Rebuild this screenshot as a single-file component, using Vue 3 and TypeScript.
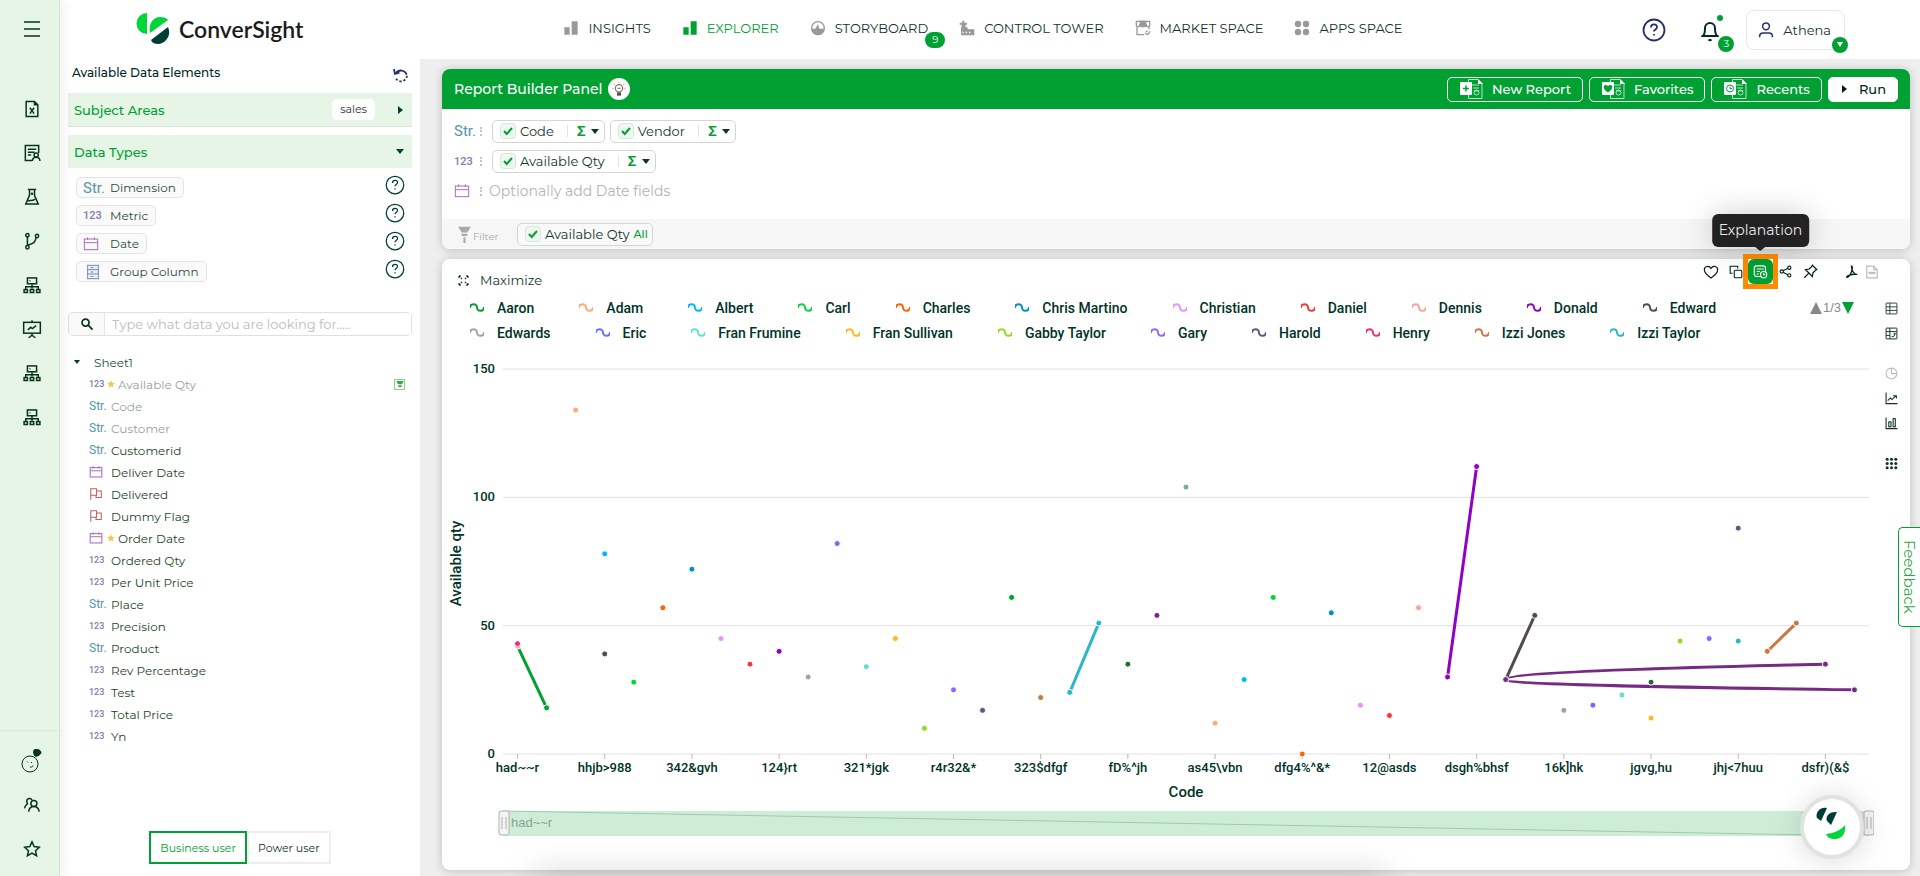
<script setup lang="ts">
import { computed, h, onBeforeUnmount, onMounted, ref } from 'vue'

const paths: Record<string, string> = {
  menu: '<path d="M4 5h16M4 12h16M4 19h16"/>',
  fileX: '<path d="M5 3h10l4 4v14H5zM15 3v4h4M9.500 10.500l5 7M14.500 10.500l-5 7"/>',
  report: '<path d="M12 21H4V3h16v9M7 7.500h10M7 11h8M7 14.500h4"/><circle cx="17" cy="14.500" r="2.500"/><path d="M12.500 21.500c0-3 2-4.500 4.500-4.500s4.500 1.500 4.500 4.500"/>',
  flask: '<path d="M7 3h10M9 3v7L4.500 20.500h15L15 10V3M7.500 17c2-2 4 1 8-2.500"/><circle cx="12" cy="8" r=".6"/>',
  branch: '<circle cx="6.500" cy="5" r="2"/><circle cx="6.500" cy="19.500" r="2"/><circle cx="18" cy="6" r="2"/><path d="M6.500 7v10.500M6.500 17c8-2 9-3 10.500-9"/>',
  server: '<rect x="6.500" y="3.500" width="11" height="7"/><path d="M9 7h1M12 10.500v6M4.500 17v-3h15v3"/><rect x="2.500" y="17.500" width="4" height="3.500"/><rect x="10" y="17.500" width="4" height="3.500"/><rect x="17.500" y="17.500" width="4" height="3.500"/>',
  board: '<rect x="2" y="4" width="20" height="13"/><path d="M7 13l3.500-3 2 1.500L17 8M12 1.500V4M12 17v3M8 22.500l4-3 4 3"/>',
  users: '<circle cx="14.500" cy="10" r="4"/><path d="M7.500 21c.5-4.500 3-7 7-7s6.500 2.500 7 7M12 5.500C10.500 2 5 3 5 7c0 2 1 3 1 3.500-2 1-3.500 3-4 6"/>',
  star: '<path d="M12 2.500l2.900 6.300 6.900.8-5.100 4.600 1.400 6.800-6.100-3.400L5.900 21l1.400-6.800-5.100-4.600 6.900-.8z"/>',
  help: '<circle cx="12" cy="12" r="10.500"/><path d="M9 9.500c0-4 6-4 6-.5 0 2.500-3 2.500-3 4.500M12 16v1.500"/>',
  bell: '<path d="M5 18c2-2 2-5 2-8a5 5 0 0 1 10 0c0 3 0 6 2 8zM3.500 18h17M10.500 21.500c1 1 2 1 3 0"/>',
  user: '<circle cx="12" cy="7" r="4.500"/><path d="M3.500 21.500v-1c0-3 2-4.500 4.500-4.500h8c2.500 0 4.500 1.500 4.500 4.500v1"/>',
  undo: '<path d="M5 10a8 8 0 0 1 14.500 1.500M2.500 4l1.500 6.500 6-1.500"/><path d="M20 13a8 8 0 0 1-14.500 4" stroke-dasharray="3 2.500"/>',
  search: '<circle cx="9.500" cy="9.500" r="6"/><path d="M14 14l7.500 7.500"/>',
  calendar: '<rect x="2" y="4.500" width="20" height="16"/><path d="M2 10h20M7 2v4M17 2v4"/>',
  flag: '<path d="M3 22V3h10v11H3M13 7h8v11h-9v-4"/>',
  group: '<rect x="4" y="2" width="16" height="20"/><path d="M4 8.500h16M4 15h16M8 5.500h5M8 12h5M8 18.500h5M16 5.500h1M16 12h1M16 18.500h1"/>',
  bars: '<path d="M2 11h8v11H2zM13 2h9v20h-9z" fill="currentColor" stroke="none"/>',
  gauge: '<path d="M2 13h6l4-7 2 7h8a10 10 0 0 1-20 0z" fill="currentColor" stroke="none"/><circle cx="12" cy="12" r="9.500"/>',
  tower: '<path d="M1 4h4V1h3v3h4v3h-2v4h3v3h10v9H3V11H4V7H1z" fill="currentColor" stroke="none"/><path d="M6 17.500v2.500M11 17.500v2.500M16 17.500v2.500" stroke="#fff"/>',
  market: '<path d="M3 10v12h11M21 10v4M2 8V2h20v6c0 3-4 3-5 0-1 3-9 3-10 0-1 3-5 3-5 0z"/><path d="M8 2h8v7H8z" fill="currentColor"/><path d="M15 19l4 3 4-5M16 17h3"/>',
  apps: '<g fill="currentColor" stroke="none"><circle cx="6" cy="6" r="4.800"/><circle cx="18" cy="6" r="4.800"/><circle cx="6" cy="18" r="4.800"/><circle cx="18" cy="18" r="4.800"/></g>',
  check: '<path d="M4 12l5.500 6L20 6"/>',
  expand: '<path d="M2 2h6M2 2v6M2 2l7 7M22 2h-6M22 2v6M22 2l-7 7M2 22h6M2 22v-6M2 22l7-7M22 22h-6M22 22v-6M22 22l-7-7" stroke-dasharray="4 2"/>',
  heart: '<path d="M12 21C5 16 2 12.500 2 8.500 2 3 9 2 12 6.500 15 2 22 3 22 8.500c0 4-3 7.500-10 12.500z"/>',
  copy: '<rect x="9" y="9" width="13" height="13" rx="2"/><path d="M6 14H2V2h13v4"/>',
  explain: '<rect x="2" y="3" width="18" height="17" rx="4"/><path d="M6 8h11M6 12h5M6 16h3"/><circle cx="17" cy="17" r="5" fill="#00a033"/><path d="M17 14.500V17h2.500"/>',
  share: '<circle cx="5" cy="12" r="3"/><circle cx="19" cy="5" r="3"/><circle cx="19" cy="19" r="3"/><path d="M7.500 10.500L16.500 6M7.500 13.500l9 4.500"/>',
  pin: '<path d="M15 2l7 7-2 1-4 4-1 6L4 9l6-1 4-4zM9 15l-7 7"/>',
  pdf: '<path d="M11 2c3 0 1 8-1 12-2 5-6 8-7 7s5-6 18-5c-5 1-10-6-10-14z"/>',
  xlsx: '<path d="M3 22V2h12l6 6v14zM15 2v6h6M6 15h12M6 12.500h12"/>',
  table: '<rect x="2" y="2" width="20" height="20" rx="1"/><path d="M2 9h20M2 15.500h20M9 2v20"/>',
  pivot: '<rect x="2" y="2" width="20" height="20" rx="1"/><path d="M2 8.500h20M9 2v20M2 15.500h7M12 18c5 0 6-2 6-6M15.500 13.500L18 11l2 2.500"/>',
  pie: '<circle cx="12" cy="12" r="10"/><path d="M12 2v10h10"/>',
  line: '<path d="M2 1v20.500h21M5 16l5-5 3 3 7-7M15 7h6v5"/>',
  barChart: '<path d="M2 1v20.500h21"/><rect x="7" y="9" width="4" height="9"/><rect x="15" y="3" width="4" height="15"/>',
  grid: '<g fill="currentColor" stroke="none"><circle cx="4" cy="4" r="2.800"/><circle cx="12" cy="4" r="2.800"/><circle cx="20" cy="4" r="2.800"/><circle cx="4" cy="12" r="2.800"/><circle cx="12" cy="12" r="2.800"/><circle cx="20" cy="12" r="2.800"/><circle cx="4" cy="20" r="2.800"/><circle cx="12" cy="20" r="2.800"/><circle cx="20" cy="20" r="2.800"/></g>',
  bulb: '<path d="M12 1v2M4 4l2 2M20 4l-2 2M2 11h2M22 11h-2" stroke="#f3b27a"/><circle cx="12" cy="11" r="5.500" stroke="#777"/><path d="M9.500 11h5" stroke="#888"/><path d="M9 17h6v5H9z" fill="#555" stroke="none"/>',
  mascot: '<circle cx="10" cy="15" r="8"/><path d="M7 12.500l1 1M11 13l1 1M10 18c2 .5 3-.5 3-1.500"/><path d="M14 1c2-1 7-1 7 3-1 2-4 4-6 3-1-1-2-4-1-6z" fill="currentColor"/>',
  funnel: '<path d="M3 1h18l-5 8H8z" fill="currentColor" stroke="none"/><path d="M8 11h8v3H8zM10.500 16h3v8h-3z" fill="currentColor" stroke="none"/>',
  marker: '<path d="M1 3h22l-5 10H6zM7 16h10v5H7z" fill="currentColor" stroke="none"/>',
}

const Icon = (props: { name: string; size?: number; weight?: number }) =>
  h('svg', {
    viewBox: '0 0 24 24',
    width: props.size ?? 16,
    height: props.size ?? 16,
    fill: 'none',
    stroke: 'currentColor',
    'stroke-width': props.weight ?? 2,
    'aria-hidden': 'true',
    innerHTML: paths[props.name],
  })
Icon.props = ['name', 'size', 'weight']

const railTop = ['fileX', 'report', 'flask', 'branch', 'server', 'board', 'server', 'server']
const railBottom = ['mascot', 'users', 'star']

const nav = [
  { label: 'INSIGHTS', icon: 'bars' },
  { label: 'EXPLORER', icon: 'bars', active: true },
  { label: 'STORYBOARD', icon: 'gauge', badge: 9 },
  { label: 'CONTROL TOWER', icon: 'tower' },
  { label: 'MARKET SPACE', icon: 'market' },
  { label: 'APPS SPACE', icon: 'apps' },
]

const dataTypes = [
  { label: 'Dimension', kind: 'str' },
  { label: 'Metric', kind: 'num' },
  { label: 'Date', kind: 'calendar' },
  { label: 'Group Column', kind: 'group' },
]

const fields = [
  { label: 'Available Qty', kind: 'num', star: true, used: true, filter: true },
  { label: 'Code', kind: 'str', used: true },
  { label: 'Customer', kind: 'str', used: true },
  { label: 'Customerid', kind: 'str' },
  { label: 'Deliver Date', kind: 'calendar' },
  { label: 'Delivered', kind: 'flag' },
  { label: 'Dummy Flag', kind: 'flag' },
  { label: 'Order Date', kind: 'calendar', star: true },
  { label: 'Ordered Qty', kind: 'num' },
  { label: 'Per Unit Price', kind: 'num' },
  { label: 'Place', kind: 'str' },
  { label: 'Precision', kind: 'num' },
  { label: 'Product', kind: 'str' },
  { label: 'Rev Percentage', kind: 'num' },
  { label: 'Test', kind: 'num' },
  { label: 'Total Price', kind: 'num' },
  { label: 'Yn', kind: 'num' },
]

const kindText: Record<string, string> = { str: 'Str.', num: '123' }
const search = ref('')
const mode = ref('Business user')

const legend = [
  [
    ['Aaron', '#00a033'], ['Adam', '#ffaa71'], ['Albert', '#00b8ff'], ['Carl', '#00d639'],
    ['Charles', '#ff6207'], ['Chris Martino', '#008fc7'], ['Christian', '#e991ff'],
    ['Daniel', '#f23838'], ['Dennis', '#ff9f9b'], ['Donald', '#9200c4'], ['Edward', '#544a4e'],
  ],
  [
    ['Edwards', '#a89fa2'], ['Eric', '#6f6ff8'], ['Fran Frumine', '#60e0cd'],
    ['Fran Sullivan', '#ffb81f'], ['Gabby Taylor', '#94dc22'], ['Gary', '#8f66ff'],
    ['Harold', '#5a5a82'], ['Henry', '#f03075'], ['Izzi Jones', '#c87845'], ['Izzi Taylor', '#2db6c8'],
  ],
]

const COUNT = 47
const points: [number, number, string][] = [
  [0, 42, '#ff9f9b'], [0, 43, '#f03075'], [1, 18, '#00a033'], [2, 134, '#ffaa71'],
  [3, 78, '#00b8ff'], [3, 39, '#544a4e'], [4, 28, '#00d639'], [5, 57, '#ff6207'],
  [6, 72, '#008fc7'], [7, 45, '#e991ff'], [8, 35, '#f23838'], [9, 40, '#9200c4'],
  [10, 30, '#a89fa2'], [11, 82, '#6f6ff8'], [12, 34, '#60e0cd'], [13, 45, '#ffb81f'],
  [14, 10, '#94dc22'], [15, 25, '#8f66ff'], [16, 17, '#5a5a82'], [17, 61, '#00a033'],
  [18, 22, '#c87845'], [19, 24, '#2db6c8'], [20, 51, '#2db6c8'], [21, 35, '#296b32'],
  [22, 54, '#762a83'], [23, 104, '#6eb58b'], [24, 12, '#ffaa71'], [25, 29, '#00b8ff'],
  [26, 61, '#00d639'], [27, 0, '#ff6207'], [28, 55, '#008fc7'], [29, 19, '#e991ff'],
  [30, 15, '#f23838'], [31, 57, '#ff9f9b'], [32, 30, '#9200c4'], [33, 112, '#9200c4'],
  [34, 29, '#762a83'], [35, 54, '#544a4e'], [36, 17, '#a89fa2'], [37, 19, '#6f6ff8'],
  [38, 23, '#60e0cd'], [39, 28, '#296b32'], [39, 14, '#ffb81f'], [40, 44, '#94dc22'],
  [41, 45, '#8f66ff'], [42, 88, '#5a5a82'], [42, 44, '#2db6c8'], [43, 40, '#c87845'],
  [44, 51, '#c87845'], [45, 35, '#762a83'], [46, 25, '#762a83'],
]
const segments: [number, number, number, number, string][] = [
  [0, 42, 1, 18, '#00a033'],
  [19, 24, 20, 51, '#2db6c8'],
  [32, 30, 33, 112, '#9200c4'],
  [34, 29, 35, 54, '#544a4e'],
  [43, 40, 44, 51, '#c87845'],
]
const categories = [
  'had~~r', 'hhjb>988', '342&gvh', '124}rt', '321*jgk', 'r4r32&*', '323$dfgf', 'fD%^jh',
  'as45\\vbn', 'dfg4%^&*', '12@asds', 'dsgh%bhsf', '16k]hk', 'jgvg,hu', 'jhj<7huu', 'dsfr)(&$',
]

const chartEl = ref<HTMLElement | null>(null)
const width = ref(1432)
const height = ref(524)
const left = 61
const top = 23
const right = computed(() => width.value - 5)
const bottom = computed(() => height.value - 116)
const x = (i: number) => left + ((right.value - left) / COUNT) * (i + 0.5)
const y = (v: number) => bottom.value - ((bottom.value - top) / 150) * v
const curve = computed(
  () =>
    `M${x(45)} ${y(35)} C${x(41)} ${y(34)} ${x(34)} ${y(32)} ${x(34)} ${y(29)}` +
    ` C${x(34)} ${y(27)} ${x(40)} ${y(26)} ${x(46)} ${y(25)}`,
)

let observer: ResizeObserver | undefined
onMounted(() => {
  const measure = () => {
    if (!chartEl.value) return
    width.value = chartEl.value.clientWidth
    height.value = chartEl.value.clientHeight
  }
  measure()
  observer = new ResizeObserver(measure)
  if (chartEl.value) observer.observe(chartEl.value)
})
onBeforeUnmount(() => observer?.disconnect())
</script>

<template>
  <div class="app">
    <aside class="rail">
      <button class="rail-btn menu" aria-label="Menu"><Icon name="menu" :size="24" :weight="1.5" /></button>
      <nav class="rail-list" aria-label="Tools">
        <button v-for="(icon, i) in railTop" :key="i" class="rail-btn" :aria-label="icon"><Icon :name="icon" :size="20" :weight="1.8" /></button>
      </nav>
      <div class="rail-foot">
        <button v-for="icon in railBottom" :key="icon" class="rail-btn" :aria-label="icon"><Icon :name="icon" :size="icon === 'mascot' ? 24 : 18" :weight="icon === 'mascot' ? 1 : 2" /></button>
      </div>
    </aside>

    <header class="topbar">
      <a href="#" class="logo">
        <svg width="34" height="32" viewBox="0 0 34 32" aria-hidden="true">
          <path d="M11 0v21A10.500 10.500 0 0 1 11 0z" fill="#00d639" />
          <path d="M14 20C12 11 17 4 24 4c4 0 7 1 8 3z" fill="#00d639" />
          <path d="M15 27L32 14c4 9-3 17-10 17-3 0-6-1-7-4z" fill="#003e35" />
        </svg>
        <span>ConverSight</span>
      </a>
      <nav class="nav">
        <a v-for="item in nav" :key="item.label" href="#" class="nav-item" :class="{ active: item.active }">
          <Icon :name="item.icon" :size="16" />
          <span>{{ item.label }}</span>
          <b v-if="item.badge" class="badge nav-badge">{{ item.badge }}</b>
        </a>
      </nav>
      <div class="account">
        <button class="plain navy" aria-label="Help"><Icon name="help" :size="24" :weight="1.8" /></button>
        <button class="plain bell" aria-label="Notifications">
          <Icon name="bell" :size="24" /><i class="dot"></i><b class="badge bell-badge">3</b>
        </button>
        <button class="profile">
          <Icon name="user" :size="18" :weight="2" class="navy" /><span>Athena</span>
          <b class="badge caret-badge"><i class="caret"></i></b>
        </button>
      </div>
    </header>

    <aside class="sidebar">
      <div class="side-title"><h2>Available Data Elements</h2><button class="plain navy" aria-label="Reset"><Icon name="undo" :size="18" :weight="2.4" /></button></div>
      <button class="section subject"><span>Subject Areas</span><em>sales</em><i class="caret right"></i></button>
      <button class="section types"><span>Data Types</span><i class="caret"></i></button>
      <ul class="types-list">
        <li v-for="t in dataTypes" :key="t.label">
          <button class="type-chip">
            <span class="kind big" :class="t.kind"><template v-if="kindText[t.kind]">{{ kindText[t.kind] }}</template><Icon v-else :name="t.kind" :size="16" :weight="1.5" /></span>
            {{ t.label }}
          </button>
          <button class="plain dark" :aria-label="'About ' + t.label"><Icon name="help" :size="20" :weight="1.5" /></button>
        </li>
      </ul>
      <label class="search">
        <span><Icon name="search" :size="14" :weight="3" /></span>
        <input v-model="search" type="text" placeholder="Type what data you are looking for....." aria-label="Search data" />
      </label>
      <button class="sheet"><i class="caret small"></i>Sheet1</button>
      <ul class="fields">
        <li v-for="f in fields" :key="f.label" :class="{ used: f.used }">
          <span class="kind" :class="f.kind"><template v-if="kindText[f.kind]">{{ kindText[f.kind] }}</template><Icon v-else :name="f.kind" :size="14" :weight="1.8" /></span>
          <svg v-if="f.star" class="fav" width="8" height="8" viewBox="0 0 24 24" aria-hidden="true"><path d="M12 1l3.300 7.500 8.200.8-6.200 5.400 1.800 8L12 18.500 4.900 22.700l1.800-8L.5 9.300l8.200-.8z" fill="#efc94c" /></svg>
          <span class="field-name">{{ f.label }}</span>
          <button v-if="f.filter" class="filter-mark" aria-label="Filtered"><Icon name="marker" :size="8" /></button>
        </li>
      </ul>
      <div class="modes">
        <button v-for="m in ['Business user', 'Power user']" :key="m" :class="{ on: mode === m }" @click="mode = m">{{ m }}</button>
      </div>
    </aside>

    <main class="main">
      <section class="builder">
        <header class="builder-head">
          <h1>Report Builder Panel</h1>
          <button class="bulb" aria-label="Tips"><Icon name="bulb" :size="16" :weight="1.8" /></button>
          <div class="actions">
            <button v-for="(a, i) in ['New Report', 'Favorites', 'Recents']" :key="a" class="action">
              <svg width="24" height="20" viewBox="0 0 24 20" fill="none" stroke="#b8e4c4" aria-hidden="true">
                <path d="M9.500 4V.5H19l4 4v15H9.500V16M12 6h8M14 9h6M15 12h5" />
                <circle cx="17.500" cy="13.500" r="2.500" />
                <path d="M19 0v5h5z" fill="#fff" stroke="none" />
                <rect x="1" y="3" width="12" height="13" rx="1" fill="#fff" stroke="none" />
                <path v-if="i === 0" d="M7 6.500v6M4 9.500h6" stroke="#00a033" stroke-width="1.500" />
                <path v-else-if="i === 1" d="M7 13.500C-1 8 4 4 7 7c3-3 8 1 0 6.500z" fill="#00a033" stroke="none" />
                <g v-else stroke="#00a033"><circle cx="7" cy="9.500" r="3.500" /><path d="M7 7.500v2h2" /></g>
              </svg>
              {{ a }}
            </button>
            <button class="action run"><i class="caret right"></i>Run</button>
          </div>
        </header>
        <div class="builder-row">
          <span class="kind big str">Str.</span><i class="grip"></i>
          <button v-for="c in ['Code', 'Vendor']" :key="c" class="chip"><i class="tick"><Icon name="check" :size="12" :weight="4" /></i>{{ c }}<i class="sep"></i><b>Σ</b><i class="caret"></i></button>
        </div>
        <div class="builder-row">
          <span class="kind big num">123</span><i class="grip"></i>
          <button class="chip"><i class="tick"><Icon name="check" :size="12" :weight="4" /></i>Available Qty<i class="sep"></i><b>Σ</b><i class="caret"></i></button>
        </div>
        <div class="builder-row">
          <span class="kind big calendar"><Icon name="calendar" :size="16" :weight="1.5" /></span><i class="grip tight"></i>
          <span class="hint">Optionally add Date fields</span>
        </div>
        <footer class="filter-bar">
          <span class="filter-label"><Icon name="funnel" :size="17" />Filter</span>
          <button class="chip filter-chip"><i class="tick"><Icon name="check" :size="12" :weight="4" /></i>Available Qty <strong>All</strong></button>
        </footer>
      </section>

      <section class="report">
        <div class="report-head">
          <button class="maximize"><Icon name="expand" :size="11" :weight="2.600" />Maximize</button>
          <div class="tools">
            <button aria-label="Favorite"><Icon name="heart" :size="16" :weight="1.8" /></button>
            <button aria-label="Copy"><Icon name="copy" :size="14" :weight="1.8" /></button>
            <button class="explain" aria-label="Explanation"><Icon name="explain" :size="15" :weight="1.8" /><span class="tip" role="tooltip">Explanation</span></button>
            <button aria-label="Share"><Icon name="share" :size="13" /></button>
            <button aria-label="Pin"><Icon name="pin" :size="15" /></button>
            <button class="export first" aria-label="Export PDF"><Icon name="pdf" :size="14" :weight="2.200" /></button>
            <button class="export off" aria-label="Export XLSX" disabled><Icon name="xlsx" :size="14" /></button>
          </div>
        </div>
        <div class="report-body">
          <div class="chart">
            <div class="legend">
              <div v-for="(row, r) in legend" :key="r" class="legend-row">
                <button v-for="[name, color] in row" :key="name">
                  <svg width="14" height="9" viewBox="0 0 14 9" fill="none" :stroke="color" stroke-width="2" aria-hidden="true"><path d="M0 5C0 0 7 0 7 4.500S14 9 14 4" /></svg>{{ name }}
                </button>
              </div>
              <div class="pager"><button class="up" aria-label="Previous"></button><span>1/3</span><button class="down" aria-label="Next"></button></div>
            </div>
            <div ref="chartEl" class="plot">
              <svg :width="width" :height="height" role="img" aria-label="Available qty by Code">
                <g v-for="v in [0, 50, 100, 150]" :key="v">
                  <line :x1="left" :x2="right" :y1="y(v)" :y2="y(v)" stroke="#e0e0e0" />
                  <text :x="left - 8" :y="y(v) + 4" text-anchor="end">{{ v }}</text>
                </g>
                <g v-for="(c, i) in categories" :key="c">
                  <line :x1="x(i * 3)" :x2="x(i * 3)" :y1="bottom" :y2="bottom + 5" stroke="#bbb" />
                  <text :x="x(i * 3)" :y="bottom + 18" text-anchor="middle">{{ c }}</text>
                </g>
                <text class="axis" :x="(left + right) / 2" :y="bottom + 43" text-anchor="middle">Code</text>
                <text class="axis" :transform="`translate(19 ${(top + bottom) / 2 + 2}) rotate(-90)`" text-anchor="middle">Available qty</text>
                <line v-for="s in segments" :key="s[0]" :x1="x(s[0])" :y1="y(s[1])" :x2="x(s[2])" :y2="y(s[3])" :stroke="s[4]" stroke-width="3" />
                <path :d="curve" fill="none" stroke="#762a83" stroke-width="3" />
                <circle v-for="(p, i) in points" :key="i" :cx="x(p[0])" :cy="y(p[1])" r="3" :fill="p[2]" stroke="#fff" />
                <rect :x="left" :y="bottom + 57" :width="right - left" height="25" fill="#ceedd7" />
                <path :d="`M${left} ${bottom + 57}L${right - 55} ${bottom + 81}`" stroke="#a3c8af" />
                <g fill="#f4f4f4" stroke="#b0b0b0">
                  <rect :x="left - 4" :y="bottom + 57" width="10" height="24" rx="2" />
                  <rect :x="right - 5" :y="bottom + 57" width="10" height="24" rx="2" />
                  <path :d="`M${left - 1} ${bottom + 63}v12M${left + 3} ${bottom + 63}v12M${right - 2} ${bottom + 63}v12M${right + 2} ${bottom + 63}v12`" />
                </g>
                <text class="range" :x="left + 8" :y="bottom + 73">had~~r</text>
              </svg>
            </div>
          </div>
          <div class="views">
            <button aria-label="Table"><Icon name="table" :size="13" :weight="1.6" /></button>
            <button aria-label="Pivot"><Icon name="pivot" :size="13" :weight="1.8" /></button>
            <button class="off spaced" aria-label="Pie" disabled><Icon name="pie" :size="13" /></button>
            <button aria-label="Line"><Icon name="line" :size="13" /></button>
            <button aria-label="Bar"><Icon name="barChart" :size="13" /></button>
            <button class="spaced" aria-label="More"><Icon name="grid" :size="13" /></button>
          </div>
        </div>
      </section>
    </main>

    <button class="feedback">Feedback</button>
    <button class="assistant" aria-label="Assistant">
      <svg width="40" height="40" viewBox="-3 -3 40 40" aria-hidden="true">
        <path d="M12-2C5-4 0 3 2 8l4 3zM22 2c-8-1-12 5-10 9l4 4z" fill="#003e35" />
        <path d="M11 24c9-1 15-4 19-9 1 7-2 14-10 14-5 0-8-2-9-5z" fill="#00d639" />
      </svg>
    </button>
    <div class="dock-shadow"></div>
  </div>
</template>

<style>
body { margin: 0; }
</style>

<style scoped>
* { box-sizing: border-box; }
.app {
  --green: #00a033;
  --ink: #003329;
  position: relative;
  display: grid;
  grid-template: 59px minmax(0, 1fr) / 60px 360px minmax(0, 1fr);
  height: 100vh;
  min-height: 860px;
  overflow: hidden;
  background: #eee;
  color: #12322b;
  font-family: Montserrat, Inter, "Liberation Sans", sans-serif;
  font-size: 12px;
}
button { font: inherit; color: inherit; background: none; border: 0; padding: 0; cursor: pointer; }
button, a { display: inline-flex; align-items: center; white-space: nowrap; text-decoration: none; }
ul { list-style: none; margin: 0; padding: 0; }
h1, h2 { margin: 0; font-weight: 500; }
i, em { font-style: normal; }
svg { flex: none; display: block; }
.plain { justify-content: center; }
.navy { color: #26306b; }
.dark { color: #003e35; }
.badge { display: flex; align-items: center; justify-content: center; position: absolute; min-width: 16px; height: 16px; border-radius: 8px; background: var(--green); color: #fff; font-size: 10px; font-weight: 400; }
.caret { width: 0; height: 0; border: 4px solid transparent; border-top: 5px solid currentColor; border-bottom: 0; }
.caret.right { border: 4px solid transparent; border-left: 5px solid currentColor; border-right: 0; }
.caret.small { border-width: 4px 3px 0; }

.rail { grid-row: 1 / 3; display: flex; flex-direction: column; background: #e6f5e6; border-right: 1px solid #d3e5d3; color: #06351a; z-index: 2; box-shadow: 2px 0 12px rgba(0, 0, 0, .08); }
.rail-btn { justify-content: center; width: 64px; height: 44px; flex: none; }
.menu { height: 58px; margin-bottom: 29px; }
.rail-list { display: flex; flex-direction: column; }
.rail-foot { display: flex; flex-direction: column; margin-top: auto; padding: 8px 0 5px; border-top: 1px solid #dceadc; }

.topbar { grid-column: 2 / 4; display: flex; align-items: center; justify-content: space-between; padding: 0 75px 0 76px; background: #fff; z-index: 1; }
.logo { gap: 9px; color: #1b1b1b; font-family: Lato, sans-serif; font-size: 23px; font-weight: 600; padding-bottom: 2px; }
.nav { display: flex; gap: 31px; margin-left: 20px; padding-bottom: 4px; }
.nav-item { position: relative; gap: 9px; font-size: 13px; color: #12322b; }
.nav-item svg { color: #999; }
.nav-item.active, .nav-item.active svg { color: var(--green); }
.nav-badge { right: -17px; top: 12px; min-width: 20px; }
.account { display: flex; align-items: center; gap: 32px; }
.bell { position: relative; color: #002b24; }
.dot { position: absolute; right: -1px; top: -3px; width: 6px; height: 6px; border-radius: 50%; background: var(--green); }
.bell-badge { right: -12px; top: 18px; }
.profile { position: relative; gap: 8px; height: 40px; padding: 0 13px 0 10px; border: 1px solid #e8e8e8; border-radius: 8px; font-size: 13px; margin-left: -8px; }
.caret-badge { right: -4px; bottom: -4px; }
.caret-badge .caret { border-width: 5px 3px 0; }

.sidebar { grid-row: 2; display: flex; flex-direction: column; padding: 0 8px; background: #fff; min-height: 0; }
.side-title { display: flex; justify-content: space-between; align-items: center; height: 34px; flex: none; padding: 0 2px 8px 4px; }
.side-title h2 { font-size: 12px; color: #00261f; }
.side-title button { padding-top: 6px; }
.section { height: 33px; flex: none; padding: 0 8px 0 6px; background: #e6f5e6; color: var(--green); font-size: 13px; font-weight: 500; }
.section span { margin-right: auto; }
.section .caret { color: #003e35; }
.section .caret.right { margin: 0 1px 0 23px; }
.section em { height: 21px; padding: 0 8px; border-radius: 5px; background: #fff; color: #333; font-size: 11px; font-weight: 400; line-height: 20px; }
.subject { height: 34px; border-bottom: 1px solid #e0e0e0; margin-bottom: 8px; }
.types-list { padding: 9px 7px 0 8px; }
.types-list li { display: flex; justify-content: space-between; align-items: flex-start; height: 28px; }
.types-list .plain { margin-top: -2px; }
.type-chip { height: 21px; padding: 0 7px 0 6px; border: 1px solid #e5e5e5; border-radius: 5px; background: #fafafa; color: #2c4a37; }
.kind { display: inline-flex; align-items: center; width: 22px; flex: none; font-family: Roboto, sans-serif; }
.kind.big { width: 27px; }
.str { color: #5594ab; font-size: 12px; }
.num { color: #7b80b0; font-size: 9px; font-weight: 500; }
.str.big { font-size: 15px; }
.num.big { font-size: 11px; }
.calendar { color: #aa6cb8; }
.flag { color: #b8615f; }
.group { color: #6d83b8; padding-left: 2px; }
.search { display: flex; height: 24px; flex: none; margin-top: 23px; border: 1px solid #e0e0e0; border-radius: 5px; overflow: hidden; }
.search span { display: flex; align-items: center; justify-content: center; width: 36px; border-right: 1px solid #e5e5e5; background: #fafafa; color: #06351a; }
.search input { flex: 1; min-width: 0; border: 0; outline: 0; padding: 0 7px; font: inherit; font-size: 13px; color: inherit; }
.search input::placeholder { color: #bcbcbc; }
.sheet { height: 22px; margin-top: 15px; padding-left: 6px; color: #1b4e3e; }
.sheet .caret { margin-right: 14px; color: #003e35; }
.fields li { display: flex; align-items: center; height: 22px; padding: 0 7px 0 21px; color: #1f4427; }
.fields .used .field-name { opacity: .5; }
.fields .fav { margin: 0 3px 0 -4px; }
.field-name { margin-right: auto; }
.filter-mark { width: 11px; height: 11px; justify-content: center; border: 1px solid #8ed09a; color: #35a845; }
.modes { display: flex; justify-content: center; margin-top: auto; padding-bottom: 12px; }
.modes button { height: 33px; padding: 0 9px; border: 2px solid #eee; font-size: 11px; }
.modes .on { border-color: var(--green); color: var(--green); }

.main { display: flex; flex-direction: column; gap: 10px; min-width: 0; min-height: 0; padding: 10px 10px 6px 22px; }
.builder, .report { border-radius: 8px; background: #fff; box-shadow: 0 1px 10px rgba(0, 0, 0, .2); }
.builder { flex: none; }
.builder-head { display: flex; align-items: center; gap: 6px; height: 40px; padding: 0 12px; border-radius: 8px 8px 0 0; background: var(--green); color: #fff; }
.builder-head h1 { font-size: 14px; }
.bulb { justify-content: center; width: 22px; height: 22px; border-radius: 50%; background: #fff; }
.actions { display: flex; gap: 6px; margin-left: auto; }
.action { gap: 9px; height: 25px; padding: 0 11px; border: 1px solid #fff; border-radius: 5px; font-size: 13px; font-weight: 500; }
.run { gap: 12px; padding-left: 13px; background: #fff; color: #001f1a; }
.builder-row { display: flex; align-items: center; height: 30px; padding-left: 12px; }
.builder-head + .builder-row { margin-top: 7px; }
.grip { width: 2px; height: 9px; border-left: 2px dotted #c4c4c4; margin-right: 10px; }
.grip.tight { margin-right: 7px; }
.builder-row .kind.big { width: 26px; }
.chip { height: 23px; margin: 0 5px 0 0; padding: 0 5px 0 7px; border: 1px solid #d5d5d5; border-radius: 5px; background: #fff; font-size: 13px; }
.tick { display: flex; align-items: center; justify-content: center; width: 16px; height: 16px; margin-right: 4px; border: 1px solid #d2ebd6; border-radius: 4px; background: #eef8f0; color: var(--green); }
.sep { width: 1px; height: 12px; margin: 0 9px 0 13px; background: #e5e5e5; }
.chip b { color: var(--green); margin-right: 5px; }
.chip strong { margin-left: 4px; color: var(--green); font-size: 11px; font-weight: 500; }
.hint { color: #b4b4b4; font-size: 14px; }
.filter-bar { display: flex; align-items: center; height: 30px; margin-top: 13px; padding-left: 14px; border-radius: 0 0 8px 8px; background: #f6f6f6; }
.filter-label { display: flex; align-items: flex-end; width: 61px; color: #aaa; font-size: 10px; }
.filter-chip { padding-right: 4px; background: #f9f9f9; }

.report { display: flex; flex-direction: column; flex: 1; min-height: 0; }
.report-head { display: flex; justify-content: space-between; align-items: flex-start; height: 36px; flex: none; padding: 0 28px 0 16px; }
.maximize { gap: 11px; height: 30px; margin-top: 6px; font-size: 13px; }
.tools { display: flex; }
.tools button { position: relative; justify-content: center; width: 25px; height: 25px; color: #001f1a; }
.tools .export { width: 20px; }
.tools .first { margin-left: 19px; }
.tools .off, .views .off { color: #bbb; }
.tools .explain { z-index: 3; border-radius: 6px; background: var(--green); color: #fff; }
.explain::before { content: ""; position: absolute; inset: -5px; border: 5px solid #ff8b00; }
.tip { position: absolute; bottom: 37px; left: 50%; transform: translateX(-50%); padding: 0 7px; border-radius: 6px; background: #222; color: #e8e8e8; font-size: 14px; line-height: 33px; box-shadow: 0 0 30px rgba(0, 0, 0, .2); }
.tip::after { content: ""; position: absolute; top: 100%; left: 50%; margin-left: -5px; border: 5px solid transparent; border-top: 4px solid #222; border-bottom: 0; }
.report-body { display: flex; flex: 1; min-height: 0; }
.chart { display: flex; flex-direction: column; flex: 1; min-width: 0; }
.legend { position: relative; flex: none; padding: 0 0 1px 28px; }
.legend-row { display: flex; gap: 45px; height: 25px; }
.legend-row button { gap: 13px; color: var(--ink); font-family: Roboto, sans-serif; font-size: 14px; font-weight: 500; }
.pager { position: absolute; right: 20px; top: 0; display: flex; align-items: center; gap: 1px; height: 25px; color: #888; font-family: "Liberation Sans", sans-serif; font-size: 13px; }
.pager button { border: 6px solid transparent; }
.pager .up { border-top: 0; border-bottom: 12px solid #888; }
.pager .down { border-bottom: 0; border-top: 12px solid var(--green); }
.plot { flex: 1; min-height: 0; overflow: hidden; }
.plot text { fill: var(--ink); font-family: Roboto, sans-serif; font-size: 13px; font-weight: 500; }
.plot .axis { font-size: 15px; }
.plot .range { fill: #8aa395; font-family: "Liberation Sans", sans-serif; font-weight: 400; }
.views { display: flex; flex-direction: column; align-items: center; width: 36px; flex: none; padding: 1px 2px 0 0; }
.views button { justify-content: center; width: 25px; height: 25px; flex: none; color: #12322b; }
.views .spaced { margin-top: 15px; }

.feedback { position: absolute; right: 0; top: 527px; z-index: 2; justify-content: center; width: 22px; height: 100px; border: 1px solid var(--green); border-right: 0; border-radius: 5px 0 0 5px; background: #fff; color: #35a845; font-size: 15px; writing-mode: vertical-rl; }
.assistant { position: absolute; right: 56px; bottom: 17px; z-index: 2; justify-content: center; width: 64px; height: 64px; border: 4px solid #e2e2e2; border-radius: 50%; background: #fff; box-shadow: 0 2px 30px rgba(0, 0, 0, .15); }
.dock-shadow { position: absolute; left: 28%; right: 28%; bottom: -24px; height: 20px; box-shadow: 0 0 36px 4px rgba(0, 0, 0, .2); pointer-events: none; }
</style>
